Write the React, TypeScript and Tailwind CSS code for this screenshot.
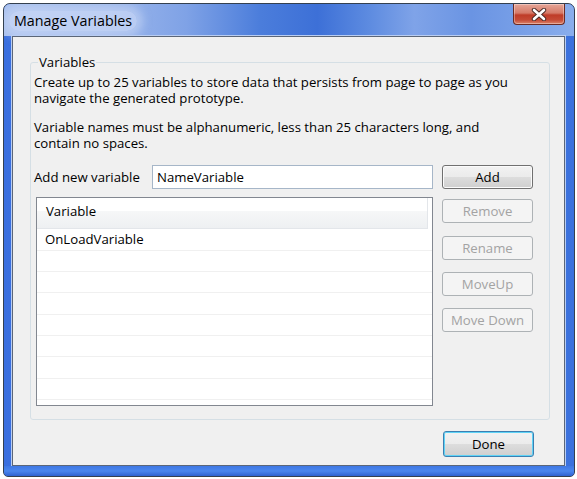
import React from "react";

const rowHeights = ["h-[22px]", "h-[21px]", "h-[21px]", "h-[22px]", "h-[21px]", "h-[21px]", "h-[22px]", "h-[21px]"];

function Btn({ label, kind, extra }: { label: string; kind: "normal" | "disabled" | "default"; extra?: string }) {
  const base =
    "flex w-[91px] items-center justify-center rounded-[3px] border leading-[15px] ";
  const styles =
    kind === "disabled"
      ? "h-[24px] border-[#adb2b5] bg-[#f4f4f4] text-[#a3a3a3]"
      : kind === "default"
      ? "h-[26px] border-[#3c7fb1] bg-[linear-gradient(180deg,#f2f2f2_0%,#ebebeb_50%,#dddddd_50%,#cfcfcf_100%)] text-black shadow-[inset_0_0_0_1px_#5fd3f6]"
      : "h-[24px] border-[#707070] bg-[linear-gradient(180deg,#f2f2f2_0%,#ebebeb_50%,#dddddd_50%,#cfcfcf_100%)] text-black shadow-[inset_0_0_0_1px_#fbfbfb]";
  return <div className={base + styles + " " + (extra ?? "")}>{label}</div>;
}

export default function App() {
  return (
    <div className="h-[479px] w-[577px] bg-white p-[3px] font-['Open_Sans','Noto_Sans',sans-serif] text-[13.2px] text-black">
      <div className="flex h-[474px] w-[572px] flex-col overflow-hidden rounded-t-[7px] rounded-b-[5px] border border-[#34404f] bg-[linear-gradient(90deg,#3a6fdf_0%,#4683ea_40%,#3b71dd_100%)]">
        {/* Title bar */}
        <div className="flex h-[32px] shrink-0 items-start bg-[linear-gradient(90deg,#a9c0ee_0%,#9cb7ec_18%,#7fa2e6_32%,#4b7ddb_45%,#3d70d7_55%,#5d8be0_64%,#7fa3e8_72%,#6a94e3_82%,#7aa1e8_92%,#8aaeec_100%)]">
          <div className="ml-[5px] mt-[7px] rounded-[12px] bg-[#d3e0f8]/60 px-[5px] leading-[20px] shadow-[0_0_8px_6px_rgba(211,224,248,0.5)]">
            <span className="text-[14.3px] text-black">Manage Variables</span>
          </div>
          <div className="ml-auto mr-[9px] flex h-[21px] w-[52px] items-center justify-center rounded-b-[4px] border border-t-0 border-[#6b2b24] bg-[linear-gradient(180deg,#e6a698_0%,#d57a68_45%,#bf3c28_55%,#c54b36_80%,#dd846a_100%)] shadow-[inset_0_0_0_1px_rgba(255,255,255,0.35)]">
            <svg width="16" height="13" viewBox="0 0 16 13">
              <path d="M3 2 L13 11 M13 2 L3 11" stroke="#4a2a26" strokeWidth="4.4" strokeLinecap="round" />
              <path d="M3 2 L13 11 M13 2 L3 11" stroke="#ffffff" strokeWidth="2.6" strokeLinecap="round" />
            </svg>
          </div>
        </div>

        {/* Middle */}
        <div className="flex h-[430px] shrink-0">
          <div className="w-[8px] shrink-0" />
          <div className="flex h-[430px] w-[553px] shrink-0 flex-col border border-[#5b6678] bg-[#f0f0f0] shadow-[0_0_0_1px_#b9cdf2]">
            {/* Group box */}
            <div className="ml-[17px] mt-[25px] flex h-[358px] w-[520px] flex-col rounded-[3px] border border-[#d5dfe5] pl-[3px]">
              <div className="-mt-[8px] ml-[4px] w-fit bg-[#f0f0f0] px-[1px] leading-[15px]">Variables</div>
              <p className="mt-[4px] leading-[16px]">
                Create up to 25 variables to store data that persists from page to page as you
                <br />
                navigate the generated prototype.
              </p>
              <p className="mt-[13px] leading-[16px]">
                Variable names must be alphanumeric, less than 25 characters long, and
                <br />
                contain no spaces.
              </p>
              <div className="mt-[14px] flex">
                <div className="flex w-[399px] flex-col">
                  <div className="flex h-[24px] items-center">
                    <span className="leading-[15px]">Add new variable</span>
                    <div className="ml-auto flex h-[24px] w-[281px] items-center border border-[#a6b6c8] bg-white pl-[4px] leading-[15px]">
                      NameVariable
                    </div>
                  </div>
                  <div className="ml-[2px] mt-[8px] flex h-[209px] w-[397px] flex-col border border-[#828790] bg-white">
                    <div className="flex h-[31px] shrink-0">
                      <div className="flex w-[391px] items-center border-b border-r border-[#e3e6ea] bg-[linear-gradient(180deg,#ffffff_0%,#ffffff_42%,#f6f7f8_43%,#eef0f2_100%)] pl-[9px] leading-[15px]">
                        <span className="-mt-[3px]">Variable</span>
                      </div>
                      <div className="flex-1 bg-white" />
                    </div>
                    {rowHeights.map((h, i) => (
                      <div key={i} className={h + " flex shrink-0 items-center border-b border-[#f0f0f0] pl-[8px] leading-[15px]"}>
                        {i === 0 ? "OnLoadVariable" : ""}
                      </div>
                    ))}
                  </div>
                </div>
                <div className="ml-[9px] flex w-[91px] flex-col">
                  <Btn label="Add" kind="normal" />
                  <Btn label="Remove" kind="disabled" extra="mt-[10px]" />
                  <Btn label="Rename" kind="disabled" extra="mt-[13px]" />
                  <Btn label="MoveUp" kind="disabled" extra="mt-[12px]" />
                  <Btn label="Move Down" kind="disabled" extra="mt-[12px]" />
                </div>
              </div>
            </div>
            <div className="mt-[11px] flex justify-end pr-[30px]">
              <Btn label="Done" kind="default" />
            </div>
          </div>
          <div className="w-[9px] shrink-0" />
        </div>
        <div className="h-[10px] shrink-0 bg-[linear-gradient(180deg,#3f78e4_0%,#4a86ee_50%,#2f62d0_100%)]" />
      </div>
    </div>
  );
}
